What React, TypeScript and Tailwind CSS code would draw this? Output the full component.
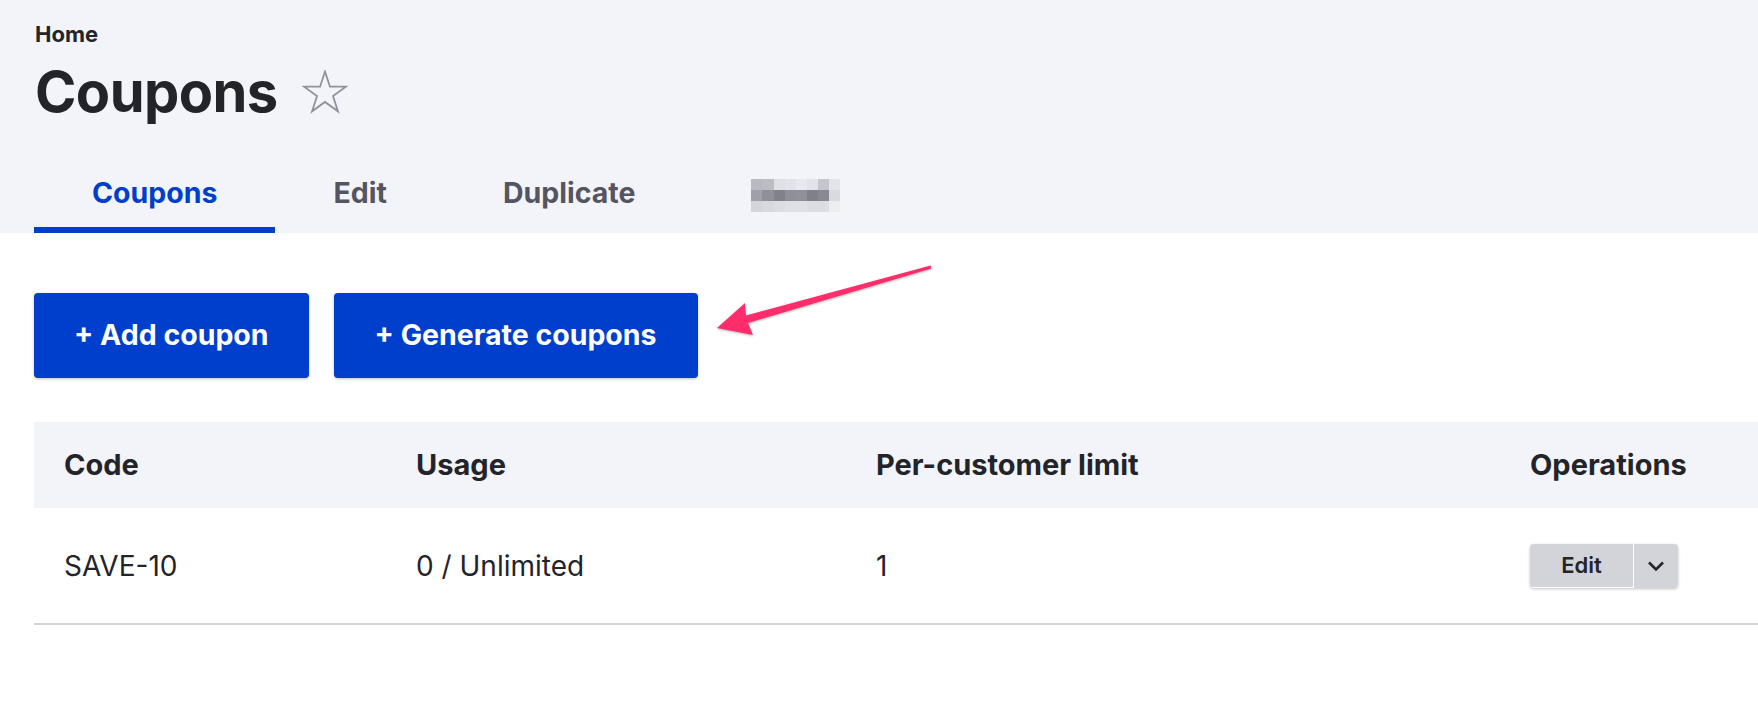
import React from "react";

const blurCells = [
  "bg-[#b9bac1]", "bg-[#bcbdc4]", "bg-[#dfe0e6]", "bg-[#e2e3e8]", "bg-[#e8e9ee]", "bg-[#e2e3e8]", "bg-[#c5c6cc]", "bg-[#e3e4e9]",
  "bg-[#9fa0a8]", "bg-[#8f909a]", "bg-[#80818b]", "bg-[#8e8f98]", "bg-[#8f9099]", "bg-[#7f808a]", "bg-[#888993]", "bg-[#d9dadf]",
  "bg-[#d4d5db]", "bg-[#d8d9de]", "bg-[#dcdde2]", "bg-[#dfe0e5]", "bg-[#dfe0e5]", "bg-[#dcdde2]", "bg-[#dcdde2]", "bg-[#ecedf1]",
];

function Star() {
  return (
    <svg width="46" height="44" viewBox="0 0 46 44" className="shrink-0">
      <polygon
        points="23,1.5 27.94,16.7 43.92,16.7 30.99,26.1 35.93,41.3 23,31.9 10.07,41.3 15.01,26.1 2.08,16.7 18.06,16.7"
        fill="none"
        stroke="#8e929c"
        strokeWidth="1.8"
        strokeLinejoin="miter"
      />
    </svg>
  );
}

function Tab({ label, active }: { label: string; active?: boolean }) {
  return (
    <div
      className={
        active
          ? "flex h-[76px] items-center border-b-[6px] border-[#003ecc] px-[58px] pt-[2px] text-[28.5px] font-bold text-[#003ecc]"
          : "flex h-[76px] items-center border-b-[6px] border-transparent px-[58px] pt-[2px] text-[28.5px] font-bold text-[#545560]"
      }
    >
      {label}
    </div>
  );
}

export default function App() {
  return (
    <div className="relative min-h-screen overflow-hidden bg-white font-['Inter',sans-serif] text-[#232429]">
      <div className="bg-[#f3f4f9] pl-[35px] pt-[20px]">
        <div className="text-[22px] font-bold leading-[28px]">Home</div>
        <div className="mt-[10px] flex items-center gap-[24px]">
          <h1 className="text-[56px] font-bold leading-[68px] tracking-[-0.01em]">Coupons</h1>
          <Star />
        </div>
        <div className="-ml-px mt-[31px] flex">
          <Tab label="Coupons" active />
          <Tab label="Edit" />
          <Tab label="Duplicate" />
          <div className="flex h-[76px] items-center px-[58px]">
            <div className="grid h-[33px] w-[89px] grid-cols-8">
              {blurCells.map((c, i) => (
                <div key={i} className={c} />
              ))}
            </div>
          </div>
        </div>
      </div>

      <div className="pl-[34px]">
        <div className="mt-[60px] flex gap-[25px]">
          <button className="h-[85px] rounded-[4px] bg-[#003ecc] px-[40px] text-[28.5px] font-bold text-white shadow-[0_1px_3px_rgba(0,0,0,0.25)]">
            + Add coupon
          </button>
          <button className="h-[85px] rounded-[4px] bg-[#003ecc] px-[41px] text-[28.5px] font-bold text-white shadow-[0_1px_3px_rgba(0,0,0,0.25)]">
            + Generate coupons
          </button>
        </div>

        <div className="mt-[44px]">
          <div className="grid h-[86px] grid-cols-[352px_460px_654px_1fr] items-center bg-[#f3f4f9] text-[29px] font-bold">
            <div className="px-[30px]">Code</div>
            <div className="px-[30px]">Usage</div>
            <div className="px-[30px]">Per-customer limit</div>
            <div className="px-[30px]">Operations</div>
          </div>
          <div className="grid h-[117px] grid-cols-[352px_460px_654px_1fr] items-center border-b-2 border-[#d3d4d9] text-[28px]">
            <div className="px-[30px]">SAVE-10</div>
            <div className="px-[30px]">0 / Unlimited</div>
            <div className="px-[30px]">1</div>
            <div className="px-[30px]">
              <div className="flex h-[44px] w-fit overflow-hidden rounded-[4px] shadow-[0_1px_3px_rgba(0,0,0,0.25)]">
                <button className="flex w-[103px] items-center justify-center border-b border-white bg-[#d3d4d9] text-[22px] font-semibold">
                  Edit
                </button>
                <div className="w-px bg-white" />
                <button className="flex w-[44px] items-center justify-center bg-[#d3d4d9]">
                  <svg width="20" height="12" viewBox="0 0 20 12">
                    <polyline points="3,2.5 10,9.5 17,2.5" fill="none" stroke="#232429" strokeWidth="2.6" />
                  </svg>
                </button>
              </div>
            </div>
          </div>
        </div>
      </div>

      <svg
        className="pointer-events-none absolute left-0 top-0 drop-shadow-[0_1px_1px_rgba(0,0,0,0.3)]"
        width="1758"
        height="708"
      >
        <polygon
          points="717,328 745,303 746,315.5 930.6,265.6 931.4,268.6 748,323 753,335"
          fill="#ff2d6c"
        />
      </svg>
    </div>
  );
}
